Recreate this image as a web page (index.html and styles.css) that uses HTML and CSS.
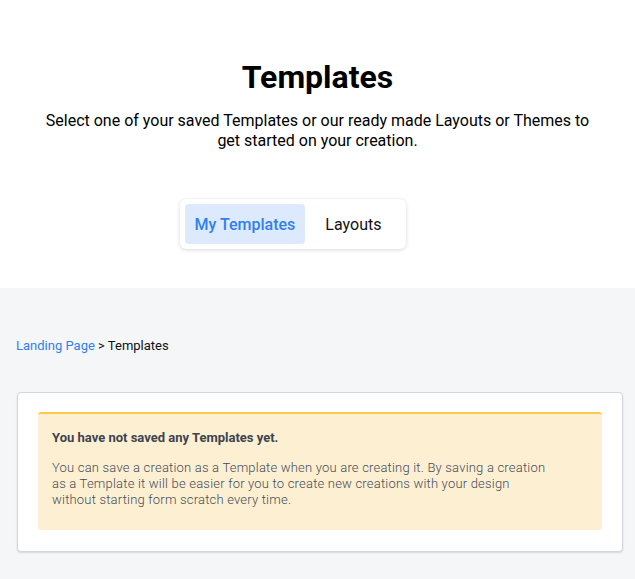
FILE: index.html
```html
<!DOCTYPE html>
<html>
<head>
<meta charset="utf-8">
<link rel="stylesheet" href="styles.css">
</head>
<body>
<section class="hero">
  <h1 class="title">Templates</h1>
  <p class="subtitle">Select one of your saved Templates or our ready made Layouts or Themes to get started on your creation.</p>
  <div class="tabs">
    <button class="tab tab-active">My Templates</button>
    <button class="tab tab-plain">Layouts</button>
  </div>
</section>
<section class="content">
  <nav class="crumbs"><a class="crumb-link" href="#">Landing Page</a> &gt; Templates</nav>
  <div class="card">
    <div class="alert">
      <div class="alert-title">You have not saved any Templates yet.</div>
      <p class="alert-text">You can save a creation as a Template when you are creating it. By saving a creation as a Template it will be easier for you to create new creations with your design without starting form scratch every time.</p>
    </div>
  </div>
</section>
</body>
</html>
```
FILE: styles.css
```css
* { box-sizing: border-box; }
html, body { margin: 0; padding: 0; }
body {
  font-family: Roboto, "Liberation Sans", sans-serif;
  background: #f5f6f8;
  color: #000;
  height: 579px;
  overflow: hidden;
}
.hero {
  background: #fff;
  height: 288px;
  padding-top: 58px;
  display: flex;
  flex-direction: column;
  align-items: center;
}
.title {
  margin: 0;
  font-size: 32px;
  line-height: 38px;
  font-weight: 700;
}
.subtitle {
  margin: 15px 0 0;
  max-width: 560px;
  text-align: center;
  font-size: 16px;
  line-height: 20px;
}
.tabs {
  margin-top: 48px;
  display: flex;
  padding: 5px;
  background: #fff;
  border-radius: 6px;
  box-shadow: 0 1px 4px rgba(0,0,0,0.14), 0 0 1px rgba(0,0,0,0.08);
  margin-left: -49px;
}
.tab {
  font-family: inherit;
  font-size: 16px;
  height: 40px;
  border: 0;
  background: transparent;
  border-radius: 4px;
  color: #111;
  cursor: pointer;
}
.tab-active {
  background: #dde9fc;
  color: #2f80ed;
  font-weight: 500;
  padding: 0 10px;
}
.tab-plain {
  padding: 0 20px;
}
.content {
  padding: 50px 12px 0 17px;
}
.crumbs {
  font-size: 13px;
  line-height: 16px;
  margin-left: -1px;
  color: #111;
}
.crumb-link {
  color: #2f80ed;
  text-decoration: none;
}
.card {
  margin-top: 38px;
  background: #fff;
  border: 1px solid #d3d6db;
  border-radius: 4px;
  box-shadow: 0 1px 2px rgba(0,0,0,0.12);
  padding: 19px 20px 21px;
}
.alert {
  background: #fdf0d2;
  border-top: 2px solid #ffca4c;
  border-radius: 3px;
  padding: 16px 14px 22px;
}
.alert-title {
  font-size: 13px;
  line-height: 16px;
  font-weight: 700;
  color: #3d4350;
}
.alert-text {
  margin: 14px 0 0;
  max-width: 500px;
  font-size: 13px;
  line-height: 16px;
  font-weight: 300;
  letter-spacing: 0.2px;
  color: #454b58;
}
```
